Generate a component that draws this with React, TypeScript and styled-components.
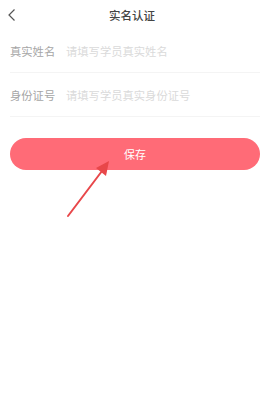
import React from "react";
import styled, { createGlobalStyle } from "styled-components";

const Global = createGlobalStyle`
  html, body { margin: 0; padding: 0; background: #fff; }
  body { font-family: "Noto Sans CJK SC", "Noto Sans", sans-serif; }
`;

const Page = styled.div`
  position: relative;
  width: 264px;
  height: 397px;
  background: #fff;
  overflow: hidden;
`;

const NavBar = styled.div`
  position: relative;
  height: 29px;
  display: flex;
  align-items: center;
  justify-content: center;
`;

const Back = styled.div`
  position: absolute;
  left: 6px;
  top: 8px;
  width: 12px;
  height: 14px;
  display: flex;
`;

const Title = styled.div`
  font-size: 11.5px;
  font-weight: 500;
  color: #444;
  line-height: 1;
  margin-top: 2px;
`;

const Form = styled.div`
  padding: 0 4px 0 10px;
  display: flex;
  flex-direction: column;
`;

const Row = styled.div`
  height: 43px;
  display: flex;
  align-items: center;
  border-bottom: 1px solid #f4f4f4;
  padding-top: 3px;
  box-sizing: border-box;
  height: 44px;
`;

const Label = styled.span`
  width: 56px;
  font-size: 11.3px;
  color: #a6a6a6;
  line-height: 1;
`;

const Placeholder = styled.span`
  font-size: 11.3px;
  color: #dadada;
  line-height: 1;
`;

const SaveButton = styled.button`
  margin: 21px 4px 0 10px;
  width: 250px;
  height: 32px;
  border: none;
  border-radius: 16px;
  background: #ff6b77;
  color: #fff;
  font-family: "Noto Sans CJK SC", sans-serif;
  font-size: 11px;
  padding: 0;
  display: flex;
  align-items: center;
  justify-content: center;
`;

const Arrow = styled.svg`
  position: absolute;
  left: 0;
  top: 0;
  pointer-events: none;
`;

export default function App() {
  return (
    <>
      <Global />
      <Page>
        <NavBar>
          <Back>
            <svg width="12" height="14" viewBox="0 0 12 14">
              <path d="M8.5 1.5 L3 7 L8.5 12.5" fill="none" stroke="#555" strokeWidth="1.2" />
            </svg>
          </Back>
          <Title>实名认证</Title>
        </NavBar>
        <Form>
          <Row>
            <Label>真实姓名</Label>
            <Placeholder>请填写学员真实姓名</Placeholder>
          </Row>
          <Row>
            <Label>身份证号</Label>
            <Placeholder>请填写学员真实身份证号</Placeholder>
          </Row>
        </Form>
        <SaveButton>保存</SaveButton>
        <Arrow width="264" height="397" viewBox="0 0 264 397">
          <line x1="68" y1="216" x2="102" y2="171" stroke="#e8474a" strokeWidth="2" strokeLinecap="round" />
          <polygon points="109,161 96,168 106,176" fill="#e8474a" />
        </Arrow>
      </Page>
    </>
  );
}
